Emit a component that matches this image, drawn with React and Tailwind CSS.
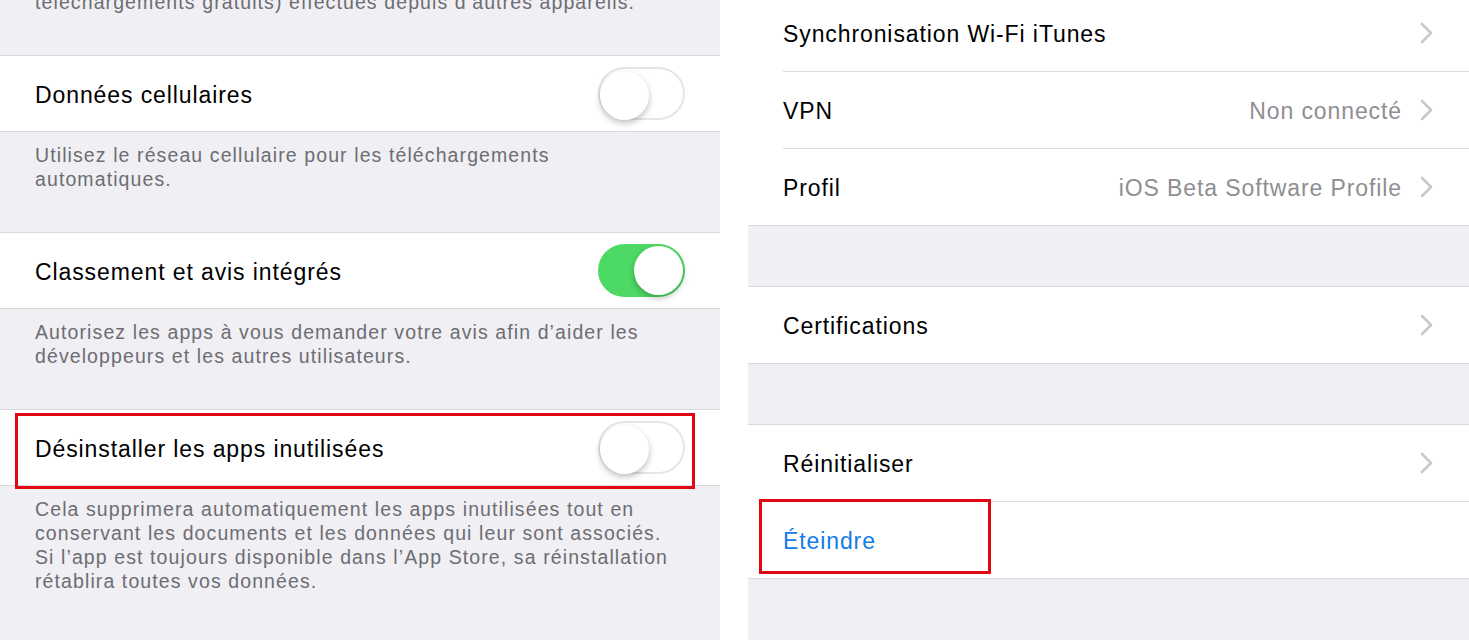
import React from "react"

const font = { fontFamily: '"Liberation Sans", Arial, sans-serif' }

const Toggle = ({ on }) => (
  <div
    className={`relative w-[87px] h-[53px] rounded-full ${
      on ? "bg-[#4cd964]" : "bg-white border-[2px] border-[#e5e5ea]"
    }`}
  >
    <div
      className={`absolute top-[2px] w-[49px] h-[49px] rounded-full bg-white shadow-[0_3px_6px_rgba(0,0,0,0.25)] ${
        on ? "right-[2px]" : "left-0 top-0"
      }`}
    />
  </div>
)

const Chevron = () => (
  <svg width="14" height="22" viewBox="0 0 14 22" className="shrink-0">
    <path d="M2 2 L11 11 L2 20" fill="none" stroke="#c7c7cc" strokeWidth="2.6" strokeLinecap="round" strokeLinejoin="round" />
  </svg>
)

const ToggleRow = ({ label, on, highlight }) => (
  <div className="relative h-[77px] shrink-0 bg-white border-y border-[#d9d8dd] flex items-center justify-between pl-[35px] pr-[35px]">
    <span className="pt-[4px] text-[23px] tracking-[0.9px] text-black">{label}</span>
    <Toggle on={on} />
    {highlight && (
      <div className="absolute left-[15px] right-[25px] top-[3px] bottom-[-4px] border-[3px] border-[#e30613]" />
    )}
  </div>
)

const Note = ({ children, className = "" }) => (
  <p className={`px-[35px] text-[19.5px] tracking-[1.1px] leading-[24px] text-[#6d6d72] ${className}`}>{children}</p>
)

const NavRow = ({ label, value, chevron = true, blue, last, className = "h-[77px]", children }) => (
  <div className={`relative pl-[35px] ${className}`}>
    <div className={`h-full flex items-center pr-[35px] ${last ? "" : "border-b border-[#dcdbe0]"}`}>
      <span className={`pt-[2px] text-[23px] tracking-[0.9px] flex-1 ${blue ? "text-[#127ce8]" : "text-black"}`}>{label}</span>
      {value && <span className="pt-[2px] text-[23px] tracking-[0.9px] text-[#8e8e93] mr-[18px]">{value}</span>}
      {chevron && <Chevron />}
    </div>
    {children}
  </div>
)

export default function App() {
  return (
    <div className="w-[1469px] h-[640px] overflow-hidden flex bg-white" style={font}>
      {/* left screenshot */}
      <div className="w-[720px] h-full bg-[#efeff4] flex flex-col">
        <div className="h-[55px] shrink-0">
          <Note className="-mt-[10px]">téléchargements gratuits) effectués depuis d’autres appareils.</Note>
        </div>
        <ToggleRow label="Données cellulaires" />
        <div className="h-[100px] shrink-0 pt-[11px]">
          <Note>
            Utilisez le réseau cellulaire pour les téléchargements
            <br />
            automatiques.
          </Note>
        </div>
        <ToggleRow label="Classement et avis intégrés" on />
        <div className="h-[100px] shrink-0 pt-[11px]">
          <Note>
            Autorisez les apps à vous demander votre avis afin d’aider les
            <br />
            développeurs et les autres utilisateurs.
          </Note>
        </div>
        <ToggleRow label="Désinstaller les apps inutilisées" highlight />
        <div className="pt-[11px]">
          <Note>
            Cela supprimera automatiquement les apps inutilisées tout en
            <br />
            conservant les documents et les données qui leur sont associés.
            <br />
            Si l’app est toujours disponible dans l’App Store, sa réinstallation
            <br />
            rétablira toutes vos données.
          </Note>
        </div>
      </div>

      <div className="w-[28px] h-full bg-white" />

      {/* right screenshot */}
      <div className="flex-1 h-full bg-[#efeff4] flex flex-col">
        <div className="bg-white -mt-[5px] border-b border-[#d9d8dd]">
          <NavRow label="Synchronisation Wi-Fi iTunes" />
          <NavRow label="VPN" value="Non connecté" />
          <NavRow label="Profil" value="iOS Beta Software Profile" last className="h-[76px]" />
        </div>
        <div className="h-[60px] shrink-0" />
        <div className="bg-white border-y border-[#d9d8dd]">
          <NavRow label="Certifications" last className="h-[76px]" />
        </div>
        <div className="h-[60px] shrink-0" />
        <div className="bg-white border-y border-[#d9d8dd]">
          <NavRow label="Réinitialiser" className="h-[77px]" />
          <NavRow label="Éteindre" chevron={false} blue last className="h-[76px]">
            <div className="absolute left-[11px] w-[232px] top-[-3px] h-[75px] border-[3px] border-[#e30613]" />
          </NavRow>
        </div>
      </div>
    </div>
  )
}
